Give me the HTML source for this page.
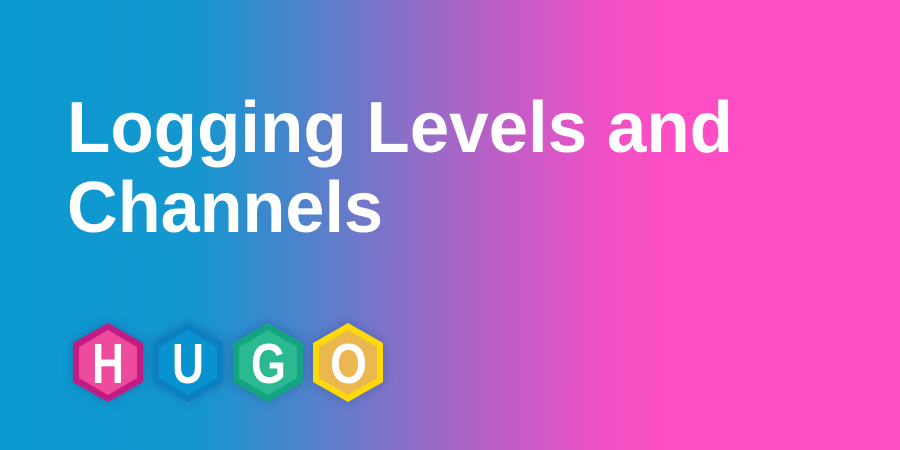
<!DOCTYPE html>
<html><head><meta charset="utf-8"><style>
html,body{margin:0;padding:0;width:900px;height:450px;overflow:hidden}
body{background:linear-gradient(90deg,#0a9ad0 0%,#1596cf 22%,#4a84cc 33%,#8a6fc8 45%,#c45cc6 57%,#ef50c4 67%,#ff4ec4 75%,#ff4ec4 100%)}
</style></head><body>
<svg width="900" height="450" style="position:absolute;left:0;top:0">
<defs><filter id="g" x="-30%" y="-30%" width="160%" height="160%"><feGaussianBlur stdDeviation="5"/></filter></defs>
<g font-family="Liberation Sans, sans-serif" font-weight="bold" fill="#fff">
<text x="67" y="152" font-size="72" textLength="666" lengthAdjust="spacingAndGlyphs">Logging Levels and</text>
<text x="67" y="232" font-size="72" textLength="316" lengthAdjust="spacingAndGlyphs">Channels</text>
</g>
<g>
<polygon points="108,322 144,342 144,382 108,402 72,382 72,342" fill="#1a3a7a" opacity=".35" filter="url(#g)"/>
<polygon points="188,322 224,342 224,382 188,402 152,382 152,342" fill="#1a3a7a" opacity=".35" filter="url(#g)"/>
<polygon points="268,322 304,342 304,382 268,402 232,382 232,342" fill="#1a3a7a" opacity=".35" filter="url(#g)"/>
<polygon points="348,322 384,342 384,382 348,402 312,382 312,342" fill="#1a3a7a" opacity=".35" filter="url(#g)"/>

<polygon points="108,323 143,343 143,382 108,402 73,382 73,343" fill="#c11c84"/>
<polygon points="108,330 137,347 137,378 108,395 79,378 79,347" fill="#ee4b9c"/>
<polygon points="188,323 223,343 223,382 188,402 153,382 153,343" fill="#0a7fc2"/>
<polygon points="188,330 217,347 217,378 188,395 159,378 159,347" fill="#0992d0"/>
<polygon points="268,323 303,343 303,382 268,402 233,382 233,343" fill="#13a582"/>
<polygon points="268,330 297,347 297,378 268,395 239,378 239,347" fill="#2bb992"/>
<polygon points="348,323 383,343 383,382 348,402 313,382 313,343" fill="#fdd80a"/>
<polygon points="348,330 377,347 377,378 348,395 319,378 319,347" fill="#ebb84f"/>
</g>
<g font-family="Liberation Sans, sans-serif" font-weight="bold" fill="#fff" font-size="57">
<text x="92" y="383" textLength="32" lengthAdjust="spacingAndGlyphs">H</text>
<text x="172" y="383" textLength="32" lengthAdjust="spacingAndGlyphs">U</text>
<text x="251" y="383" textLength="35" lengthAdjust="spacingAndGlyphs">G</text>
<text x="330" y="383" textLength="37" lengthAdjust="spacingAndGlyphs">O</text>
</g>
</svg>
</body></html>
